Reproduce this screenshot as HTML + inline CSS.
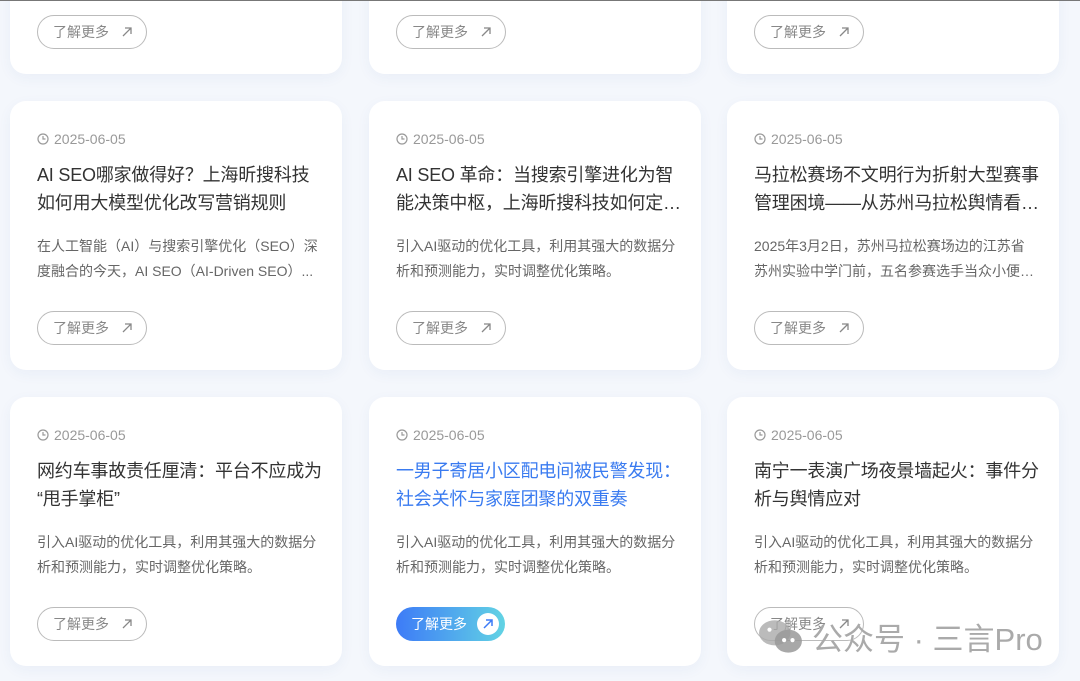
<!DOCTYPE html>
<html><head><meta charset="utf-8"><style>
*{margin:0;padding:0;box-sizing:border-box}
body{width:1080px;height:681px;overflow:hidden;background:#f4f7fc;font-family:"Liberation Sans","Noto Sans CJK SC",sans-serif;position:relative}
.topline{position:absolute;left:0;top:0;width:1080px;height:1px;background:#777;z-index:5}
.card{position:absolute;width:332px;height:269px;background:#fff;border-radius:16px;box-shadow:0 4px 14px rgba(40,80,160,0.05)}
.date{position:absolute;left:27px;top:30px;font-size:14px;color:#999;display:flex;align-items:center;gap:5px}
.date svg{width:12px;height:12px}
.title{position:absolute;left:27px;top:60px;width:300px;font-size:18px;line-height:28px;color:#333;white-space:nowrap;letter-spacing:-0.2px}
.desc{position:absolute;left:27px;top:133px;width:300px;font-size:14px;line-height:25px;color:#666;white-space:nowrap}
.btn{position:absolute;left:27px;top:210px;width:110px;height:34px;border:1px solid #bbb;border-radius:17px;font-size:14px;color:#888;padding-left:15px;line-height:32px}
.btn svg{position:absolute;right:14px;top:11px;width:10px;height:10px}
.btn.act{border:none;background:linear-gradient(90deg,#3d7bf7,#62d3e4);color:#fff;width:109px;line-height:34px}
.btn.act .c{position:absolute;right:6px;top:6px;width:22px;height:22px;border-radius:50%;background:#fff}
.btn.act .c svg{right:6px;top:6px}
.blue{color:#3a7bf0}
.wm{position:absolute;left:758px;top:614px;font-size:31px;color:#aaa;display:flex;align-items:center;gap:8px}
</style></head><body>
<div class="topline"></div>

<div class="card" style="left:10px;top:-195px"><div class="btn">了解更多<svg viewBox="0 0 10 10"><path d="M1 9L9 1M3 1H9V7" stroke="#888" stroke-width="1.3" fill="none"/></svg></div></div>
<div class="card" style="left:369px;top:-195px"><div class="btn">了解更多<svg viewBox="0 0 10 10"><path d="M1 9L9 1M3 1H9V7" stroke="#888" stroke-width="1.3" fill="none"/></svg></div></div>
<div class="card" style="left:727px;top:-195px"><div class="btn">了解更多<svg viewBox="0 0 10 10"><path d="M1 9L9 1M3 1H9V7" stroke="#888" stroke-width="1.3" fill="none"/></svg></div></div>

<div class="card" style="left:10px;top:101px">
<div class="date"><svg viewBox="0 0 12 12"><circle cx="6" cy="6" r="5" stroke="#999" fill="none" stroke-width="1.2"/><path d="M6 3V6H8.5" stroke="#999" fill="none" stroke-width="1.2"/></svg>2025-06-05</div>
<div class="title">AI SEO哪家做得好？上海昕搜科技<br>如何用大模型优化改写营销规则</div>
<div class="desc">在人工智能（AI）与搜索引擎优化（SEO）深<br>度融合的今天，AI SEO（AI-Driven SEO）...</div>
<div class="btn">了解更多<svg viewBox="0 0 10 10"><path d="M1 9L9 1M3 1H9V7" stroke="#888" stroke-width="1.3" fill="none"/></svg></div></div>

<div class="card" style="left:369px;top:101px">
<div class="date"><svg viewBox="0 0 12 12"><circle cx="6" cy="6" r="5" stroke="#999" fill="none" stroke-width="1.2"/><path d="M6 3V6H8.5" stroke="#999" fill="none" stroke-width="1.2"/></svg>2025-06-05</div>
<div class="title">AI SEO 革命：当搜索引擎进化为智<br>能决策中枢，上海昕搜科技如何定…</div>
<div class="desc">引入AI驱动的优化工具，利用其强大的数据分<br>析和预测能力，实时调整优化策略。</div>
<div class="btn">了解更多<svg viewBox="0 0 10 10"><path d="M1 9L9 1M3 1H9V7" stroke="#888" stroke-width="1.3" fill="none"/></svg></div></div>

<div class="card" style="left:727px;top:101px">
<div class="date"><svg viewBox="0 0 12 12"><circle cx="6" cy="6" r="5" stroke="#999" fill="none" stroke-width="1.2"/><path d="M6 3V6H8.5" stroke="#999" fill="none" stroke-width="1.2"/></svg>2025-06-05</div>
<div class="title">马拉松赛场不文明行为折射大型赛事<br>管理困境——从苏州马拉松舆情看…</div>
<div class="desc">2025年3月2日，苏州马拉松赛场边的江苏省<br>苏州实验中学门前，五名参赛选手当众小便…</div>
<div class="btn">了解更多<svg viewBox="0 0 10 10"><path d="M1 9L9 1M3 1H9V7" stroke="#888" stroke-width="1.3" fill="none"/></svg></div></div>

<div class="card" style="left:10px;top:397px">
<div class="date"><svg viewBox="0 0 12 12"><circle cx="6" cy="6" r="5" stroke="#999" fill="none" stroke-width="1.2"/><path d="M6 3V6H8.5" stroke="#999" fill="none" stroke-width="1.2"/></svg>2025-06-05</div>
<div class="title">网约车事故责任厘清：平台不应成为<br>“甩手掌柜”</div>
<div class="desc">引入AI驱动的优化工具，利用其强大的数据分<br>析和预测能力，实时调整优化策略。</div>
<div class="btn">了解更多<svg viewBox="0 0 10 10"><path d="M1 9L9 1M3 1H9V7" stroke="#888" stroke-width="1.3" fill="none"/></svg></div></div>

<div class="card" style="left:369px;top:397px">
<div class="date"><svg viewBox="0 0 12 12"><circle cx="6" cy="6" r="5" stroke="#999" fill="none" stroke-width="1.2"/><path d="M6 3V6H8.5" stroke="#999" fill="none" stroke-width="1.2"/></svg>2025-06-05</div>
<div class="title blue">一男子寄居小区配电间被民警发现：<br>社会关怀与家庭团聚的双重奏</div>
<div class="desc">引入AI驱动的优化工具，利用其强大的数据分<br>析和预测能力，实时调整优化策略。</div>
<div class="btn act">了解更多<span class="c"><svg viewBox="0 0 10 10"><path d="M1 9L9 1M3 1H9V7" stroke="#3d7bf7" stroke-width="1.5" fill="none"/></svg></span></div></div>

<div class="card" style="left:727px;top:397px">
<div class="date"><svg viewBox="0 0 12 12"><circle cx="6" cy="6" r="5" stroke="#999" fill="none" stroke-width="1.2"/><path d="M6 3V6H8.5" stroke="#999" fill="none" stroke-width="1.2"/></svg>2025-06-05</div>
<div class="title">南宁一表演广场夜景墙起火：事件分<br>析与舆情应对</div>
<div class="desc">引入AI驱动的优化工具，利用其强大的数据分<br>析和预测能力，实时调整优化策略。</div>
<div class="btn">了解更多<svg viewBox="0 0 10 10"><path d="M1 9L9 1M3 1H9V7" stroke="#888" stroke-width="1.3" fill="none"/></svg></div></div>

<div class="wm"><svg width="46" height="38" viewBox="0 0 44 36"><ellipse cx="16" cy="14" rx="15" ry="12" fill="#aaa" opacity=".8"/><ellipse cx="29" cy="22" rx="13" ry="11" fill="#999" opacity=".85"/><circle cx="25" cy="21" r="2" fill="#fff"/><circle cx="33" cy="21" r="2" fill="#fff"/><circle cx="11" cy="11" r="2" fill="#fff"/></svg>公众号 · 三言Pro</div>
</body></html>
